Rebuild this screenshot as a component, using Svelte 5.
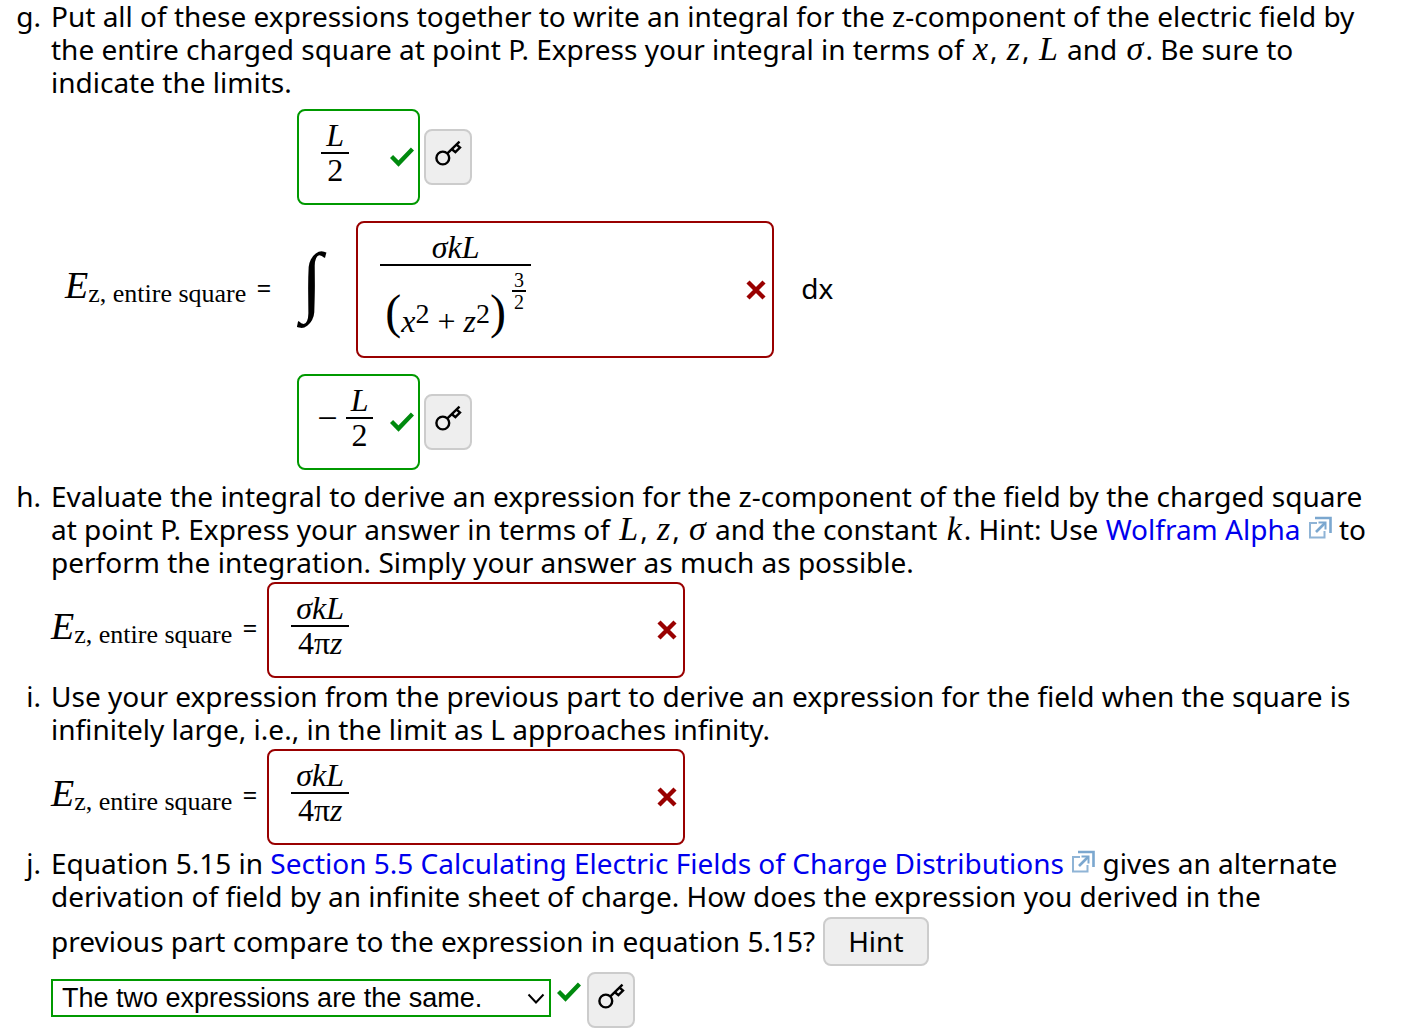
<!--
@component Question parts g - j: electric field of a charged square.
-->
<script>
   const options = [
      'The two expressions are the same.',
      'The two expressions are different.'
   ];

   let comparison = $state(options[0]);
   let hintShown = $state(false);
</script>

{#snippet check()}
   <svg class="mark" width="24" height="20" viewBox="0 0 24 20" role="img" aria-label="Correct">
      <path d="M1.5 9.5 L8.5 16.5 L22.5 2" fill="none" stroke="#008a0e" stroke-width="4.4" />
   </svg>
{/snippet}

{#snippet cross()}
   <svg class="mark" width="20" height="20" viewBox="0 0 20 20" role="img" aria-label="Incorrect">
      <path d="M2 2 L18 18 M18 2 L2 18" fill="none" stroke="#900" stroke-width="4.4" />
   </svg>
{/snippet}

{#snippet keyButton()}
   <button class="key" type="button" aria-label="Show answer key">
      <svg width="28" height="28" viewBox="0 0 28 28" fill="none" stroke="#000" stroke-width="2.4">
         <circle cx="8.8" cy="19" r="6.4" />
         <path d="M13.4 14.3 L25.5 2.6" />
         <path d="M17.6 10 L21.4 13.2 L26 8.6 L22.6 5.6" />
      </svg>
   </button>
{/snippet}

{#snippet external()}
   <svg class="external" width="24" height="24" viewBox="0 0 24 24" fill="none" aria-hidden="true">
      <path d="M9 7 H2 V21.5 H16.5 V15" stroke="#8fb4d6" stroke-width="2" />
      <path d="M7 2 H22.5 V17" stroke="#7ba7cf" stroke-width="2.6" />
      <path d="M8 16 L17 7" stroke="#7ba7cf" stroke-width="2.6" />
      <path d="M10.5 6.5 H17.5 V13.5" stroke="#7ba7cf" stroke-width="2" />
   </svg>
{/snippet}

{#snippet field()}
   <span class="field"><i>E</i><span class="sub">z, entire square</span></span>
   <span class="equals">=</span>
{/snippet}

{#snippet wrongAnswer(label)}
   <div class="equation">
      {@render field()}
      <div class="answer wide wrong" role="textbox" tabindex="0" aria-label={label}>
         <span class="frac">
            <span class="num"><i>σkL</i></span>
            <span class="den">4π<i>z</i></span>
         </span>
         {@render cross()}
      </div>
   </div>
{/snippet}

<main>
   <ol>
      <li>
         <span class="letter">g.</span>
         <div class="part">
            <p>
               Put all of these expressions together to write an integral for the z-component of the electric field by<br />
               the entire charged square at point P. Express your integral in terms of <i class="var">x</i>, <i class="var">z</i>, <i class="var">L</i> and <i class="var">σ</i>. Be sure to<br />
               indicate the limits.
            </p>
            <div class="equation integral">
               {@render field()}
               <div class="stack">
                  <div class="limit">
                     <div class="answer right" role="textbox" tabindex="0" aria-label="Upper limit">
                        <span class="frac">
                           <span class="num"><i>L</i></span>
                           <span class="den">2</span>
                        </span>
                        {@render check()}
                     </div>
                     {@render keyButton()}
                  </div>
                  <div class="integrand">
                     <span class="int-sign">∫</span>
                     <div class="answer wide wrong" role="textbox" tabindex="0" aria-label="Integrand">
                        <span class="frac">
                           <span class="num"><i>σkL</i></span>
                           <span class="den power">
                              <span class="paren">(</span>
                              <span class="base"><i>x</i><sup>2</sup> + <i>z</i><sup>2</sup></span>
                              <span class="paren">)</span>
                              <span class="frac small">
                                 <span class="num">3</span>
                                 <span class="den">2</span>
                              </span>
                           </span>
                        </span>
                        {@render cross()}
                     </div>
                     <span class="dx">dx</span>
                  </div>
                  <div class="limit">
                     <div class="answer right" role="textbox" tabindex="0" aria-label="Lower limit">
                        <span class="signed">
                           <span class="minus">−</span>
                           <span class="frac">
                              <span class="num"><i>L</i></span>
                              <span class="den">2</span>
                           </span>
                        </span>
                        {@render check()}
                     </div>
                     {@render keyButton()}
                  </div>
               </div>
            </div>
         </div>
      </li>

      <li>
         <span class="letter">h.</span>
         <div class="part">
            <p>
               Evaluate the integral to derive an expression for the z-component of the field by the charged square<br />
               at point P. Express your answer in terms of <i class="var">L</i>, <i class="var">z</i>, <i class="var">σ</i> and the constant <i class="var">k</i>. Hint: Use <a href="#wolfram">Wolfram Alpha {@render external()}</a> to<br />
               perform the integration. Simply your answer as much as possible.
            </p>
            {@render wrongAnswer('Field of the charged square')}
         </div>
      </li>

      <li>
         <span class="letter">i.</span>
         <div class="part">
            <p>
               Use your expression from the previous part to derive an expression for the field when the square is<br />
               infinitely large, i.e., in the limit as L approaches infinity.
            </p>
            {@render wrongAnswer('Field of the infinite square')}
         </div>
      </li>

      <li>
         <span class="letter">j.</span>
         <div class="part">
            <p>
               Equation 5.15 in <a href="#section-5-5">Section 5.5 Calculating Electric Fields of Charge Distributions {@render external()}</a> gives an alternate<br />
               derivation of field by an infinite sheet of charge. How does the expression you derived in the
            </p>
            <div class="hint-row">
               <label for="comparison">previous part compare to the expression in equation 5.15?</label>
               <button class="hint" type="button" aria-pressed={hintShown} onclick={() => hintShown = !hintShown}>Hint</button>
            </div>
            <div class="choice">
               <span class="select">
                  <select id="comparison" bind:value={comparison}>
                     {#each options as option}
                        <option>{option}</option>
                     {/each}
                  </select>
                  <svg width="18" height="12" viewBox="0 0 18 12" aria-hidden="true">
                     <path d="M1.5 1.5 L9 9.5 L16.5 1.5" fill="none" stroke="#000" stroke-width="2" />
                  </svg>
               </span>
               {@render check()}
               {@render keyButton()}
            </div>
         </div>
      </li>
   </ol>
</main>

<style>
   :global(body) {
      margin: 0;
      background: #fff;
   }

   main {
      font-family: "Noto Sans", "Open Sans", sans-serif;
      font-size: 28px;
      line-height: 33px;
      color: #000;
   }

   ol {
      list-style: none;
      margin: 0;
      padding: 0;
   }

   li {
      display: grid;
      grid-template-columns: 41px 1fr;
      column-gap: 10px;
      margin-bottom: 2px;
   }

   .letter {
      text-align: right;
   }

   p {
      margin: 0;
      white-space: nowrap;
   }

   a {
      color: #00e;
      text-decoration: none;
   }

   .var,
   .field,
   .answer,
   .int-sign {
      font-family: "Liberation Serif", serif;
   }

   .var {
      margin: 0 2px;
      font-size: 34px;
      line-height: 0;
   }

   .external {
      vertical-align: 0;
   }

   .equation {
      display: flex;
      align-items: center;
      margin-top: 3px;
   }

   .integral {
      margin: 10px 0 8px 14px;
   }

   .field {
      padding-bottom: 8px;
      font-size: 38px;
      white-space: nowrap;
   }

   .sub {
      font-size: 26px;
      vertical-align: -4px;
      line-height: 0;
   }

   .equals {
      width: 35px;
      padding-bottom: 3px;
      font-size: 26px;
      text-align: center;
   }

   .integral .equals {
      margin-right: 16px;
   }

   .stack {
      display: flex;
      flex-direction: column;
      gap: 16px;
   }

   .limit,
   .integrand {
      display: flex;
      align-items: center;
   }

   .limit {
      gap: 4px;
   }

   .answer {
      display: flex;
      align-items: center;
      justify-content: space-between;
      box-sizing: border-box;
      width: 123px;
      min-height: 96px;
      padding: 8px 6px 8px 18px;
      border: 2px solid #090;
      border-radius: 8px;
      font-size: 32px;
      line-height: 33px;
   }

   .answer > .frac,
   .answer > .signed {
      align-self: flex-start;
   }

   .wide {
      width: 418px;
      padding-left: 22px;
   }

   .wrong {
      border-color: #900;
   }

   .right {
      padding-right: 4px;
   }

   .limit .frac {
      margin-left: 4px;
   }

   .frac {
      display: inline-flex;
      flex-direction: column;
      text-align: center;
   }

   .num {
      padding: 0 5px;
      border-bottom: 2px solid #000;
   }

   .power {
      display: flex;
      align-items: flex-end;
      padding: 4px 5px 6px;
   }

   .paren {
      margin-top: 12px;
      font-size: 48px;
      line-height: 60px;
   }

   .base {
      padding-bottom: 4px;
      white-space: nowrap;
   }

   .base sup {
      font-size: 28px;
      line-height: 0;
      vertical-align: 9px;
   }

   .small {
      align-self: flex-start;
      margin-left: 6px;
      font-size: 20px;
      line-height: 20px;
   }

   .small .num {
      padding: 0 2px;
   }

   .signed {
      display: flex;
      align-items: center;
   }

   .minus {
      font-size: 36px;
      margin-right: 4px;
   }

   .mark {
      flex: none;
   }

   .int-sign {
      box-sizing: border-box;
      width: 59px;
      padding: 0 0 18px 4px;
      font-size: 78px;
      line-height: 80px;
   }

   .dx {
      margin-left: 27px;
      padding-bottom: 3px;
   }

   button {
      box-sizing: border-box;
      border: 2px solid #ccc;
      border-radius: 8px;
      background: #eee;
      color: #000;
      font: inherit;
      cursor: pointer;
   }

   .key {
      display: flex;
      align-items: center;
      justify-content: center;
      width: 48px;
      height: 56px;
      padding: 0 0 8px;
   }

   .hint-row {
      display: flex;
      align-items: center;
      gap: 8px;
      margin-top: 4px;
   }

   .hint {
      height: 49px;
      padding: 0 23px;
   }

   .choice {
      display: flex;
      align-items: center;
      gap: 6px;
      margin-top: 6px;
   }

   .choice .mark {
      margin-bottom: 16px;
   }

   .select {
      position: relative;
      width: 500px;
      padding-bottom: 4px;
   }

   select {
      display: block;
      appearance: none;
      box-sizing: border-box;
      width: 100%;
      height: 38px;
      padding: 0 32px 0 9px;
      border: 2px solid #090;
      border-radius: 0;
      background: #fff;
      color: #000;
      font-family: "Liberation Sans", sans-serif;
      font-size: 27px;
   }

   .select svg {
      position: absolute;
      right: 6px;
      top: 14px;
      pointer-events: none;
   }
</style>
